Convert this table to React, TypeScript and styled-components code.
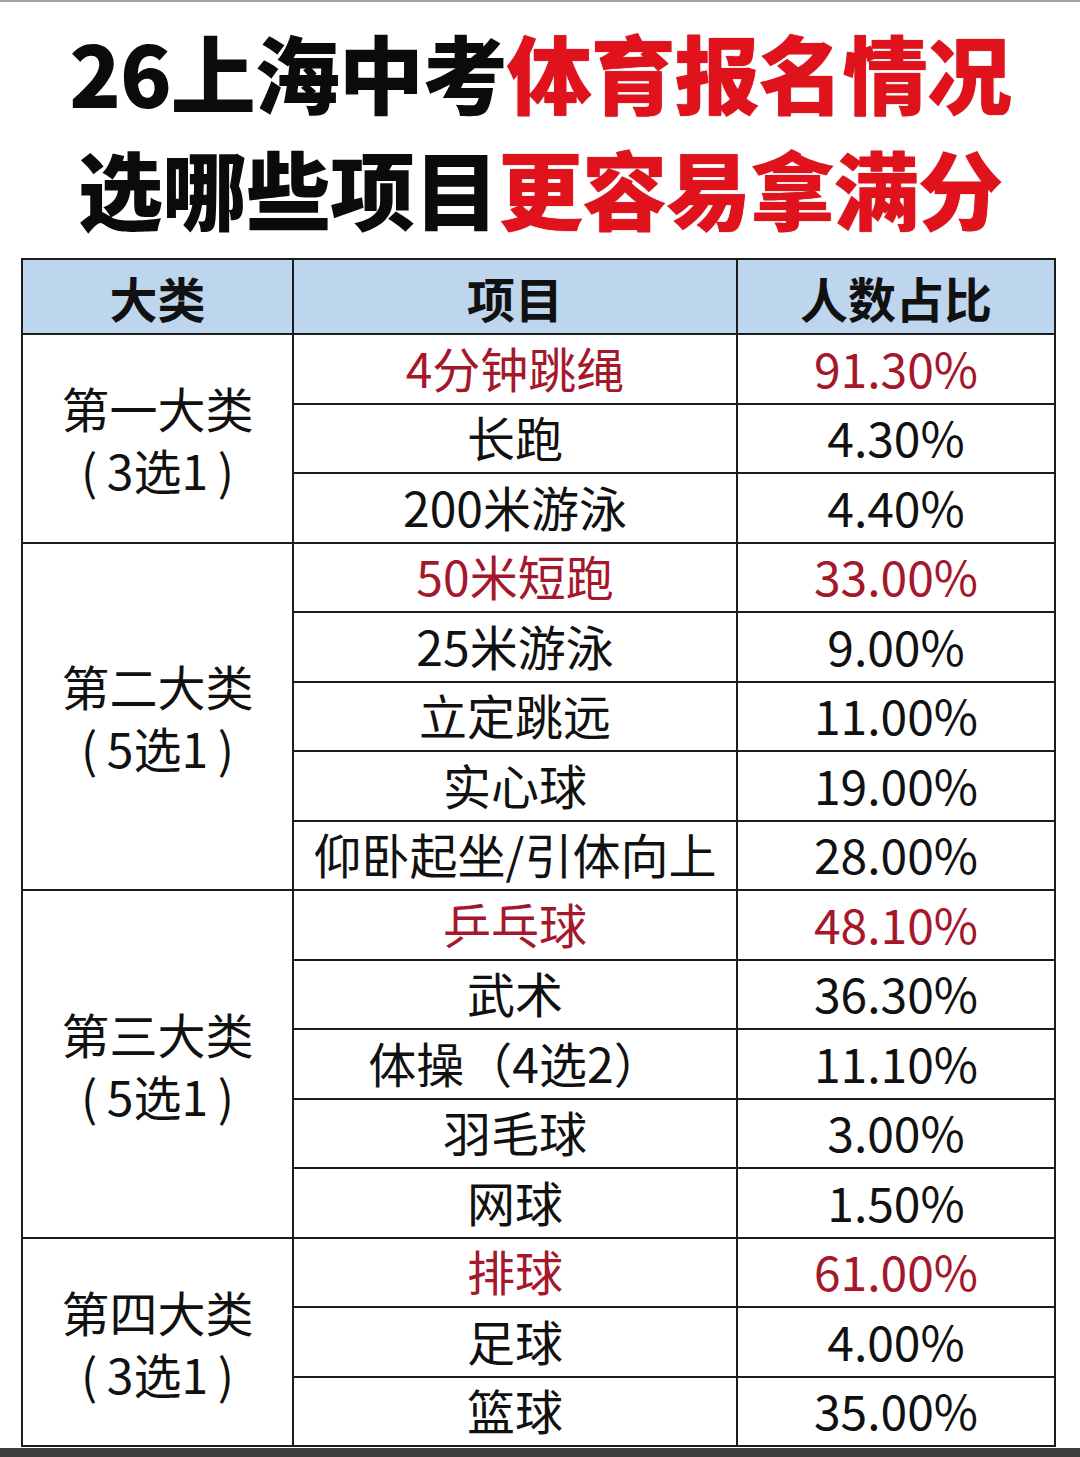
import styled, { createGlobalStyle } from "styled-components";

const GlobalStyle = createGlobalStyle`
  html, body {
    margin: 0;
    padding: 0;
    background: #fff;
  }
  body {
    font-family: "Noto Sans CJK SC", "Noto Sans", sans-serif;
  }
`;

interface Item {
  name: string;
  percent: string;
  hot?: boolean;
}

interface Group {
  title: string;
  pick: string;
  items: Item[];
}

const groups: Group[] = [
  {
    title: "第一大类",
    pick: "(\u20093选1\u2009)",
    items: [
      { name: "4分钟跳绳", percent: "91.30%", hot: true },
      { name: "长跑", percent: "4.30%" },
      { name: "200米游泳", percent: "4.40%" },
    ],
  },
  {
    title: "第二大类",
    pick: "(\u20095选1\u2009)",
    items: [
      { name: "50米短跑", percent: "33.00%", hot: true },
      { name: "25米游泳", percent: "9.00%" },
      { name: "立定跳远", percent: "11.00%" },
      { name: "实心球", percent: "19.00%" },
      { name: "仰卧起坐/引体向上", percent: "28.00%" },
    ],
  },
  {
    title: "第三大类",
    pick: "(\u20095选1\u2009)",
    items: [
      { name: "乒乓球", percent: "48.10%", hot: true },
      { name: "武术", percent: "36.30%" },
      { name: "体操（4选2）", percent: "11.10%" },
      { name: "羽毛球", percent: "3.00%" },
      { name: "网球", percent: "1.50%" },
    ],
  },
  {
    title: "第四大类",
    pick: "(\u20093选1\u2009)",
    items: [
      { name: "排球", percent: "61.00%", hot: true },
      { name: "足球", percent: "4.00%" },
      { name: "篮球", percent: "35.00%" },
    ],
  },
];

const App = () => {
  return (
    <Page>
      <GlobalStyle />
      <Title>
        <TitleLine>
          26上海中考<Red>体育报名情况</Red>
        </TitleLine>
        <TitleLine>
          选哪些项目<Red>更容易拿满分</Red>
        </TitleLine>
      </Title>
      <Table>
        <colgroup>
          <col style={{ width: 271 }} />
          <col style={{ width: 444 }} />
          <col />
        </colgroup>
        <thead>
          <tr>
            <HeadCell>大类</HeadCell>
            <HeadCell>项目</HeadCell>
            <HeadCell>人数占比</HeadCell>
          </tr>
        </thead>
        <tbody>
          {groups.map((group) =>
            group.items.map((item, i) => (
              <Row key={group.title + item.name}>
                {i === 0 && (
                  <CategoryCell rowSpan={group.items.length}>
                    {group.title + "\n" + group.pick}
                  </CategoryCell>
                )}
                <Cell $hot={item.hot}>{item.name}</Cell>
                <Cell $hot={item.hot}>{item.percent}</Cell>
              </Row>
            ))
          )}
        </tbody>
      </Table>
      <BottomBar />
    </Page>
  );
};

export default App;

const Page = styled.div`
  width: 1080px;
  min-height: 1457px;
  box-sizing: border-box;
  border-top: 2px solid #a3a3a3;
  display: flex;
  flex-direction: column;
  background: #fff;
`;

const Title = styled.div`
  padding-top: 11px;
  display: flex;
  flex-direction: column;
  align-items: center;
`;

const TitleLine = styled.div`
  font-size: 85px;
  line-height: 116px;
  font-weight: 900;
  color: #0b0b0b;
  white-space: nowrap;
  letter-spacing: -1px;
`;

const Red = styled.span`
  color: #e0131c;
  text-shadow: 0 0 1px #9c0a10;
`;

const Table = styled.table`
  margin: 13px 0 0 21px;
  width: 1035px;
  border-collapse: collapse;
  table-layout: fixed;
  border: 2px solid #1c1c1c;
  td,
  th {
    border: 2px solid #1c1c1c;
    padding: 0;
    text-align: center;
  }
`;

const HeadCell = styled.th`
  height: 73px;
  background: #bed5ee;
  font-size: 48px;
  font-weight: 700;
  color: #111;
`;

const Row = styled.tr`
  height: 69.5px;
`;

const Cell = styled.td<{ $hot?: boolean }>`
  font-size: 48px;
  font-weight: 400;
  line-height: 1;
  padding-bottom: 4px !important;
  color: ${(p) => (p.$hot ? "#a5182c" : "#111")};
  white-space: nowrap;
`;

const CategoryCell = styled.td`
  font-size: 48px;
  line-height: 62px;
  color: #111;
  white-space: pre;
`;

const BottomBar = styled.div`
  margin-top: auto;
  height: 9px;
  background: #3d3d3d;
`;
